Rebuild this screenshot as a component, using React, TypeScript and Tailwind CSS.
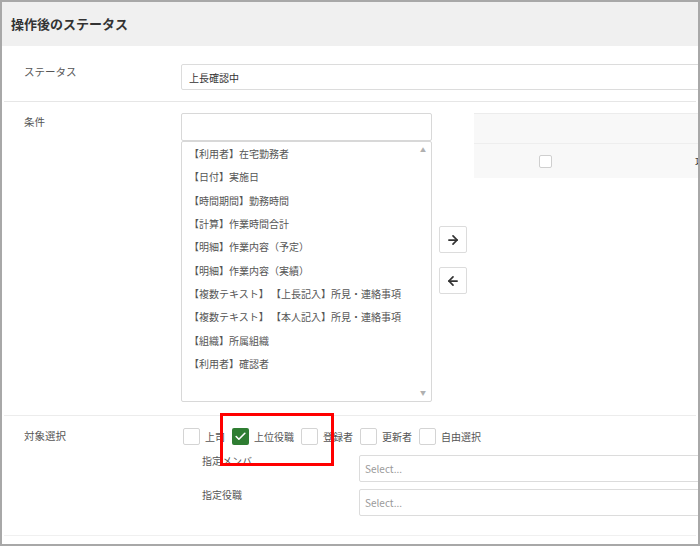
import { ArrowLeft, ArrowRight, Check } from "lucide-react";

const FONT = { fontFamily: '"Noto Sans CJK JP", "Noto Sans", sans-serif' };

const items = [
  "【利用者】在宅勤務者",
  "【日付】実施日",
  "【時間期間】勤務時間",
  "【計算】作業時間合計",
  "【明細】作業内容（予定）",
  "【明細】作業内容（実績）",
  "【複数テキスト】 【上長記入】所見・連絡事項",
  "【複数テキスト】 【本人記入】所見・連絡事項",
  "【組織】所属組織",
  "【利用者】確認者",
];

const targets = [
  { label: "上司", checked: false },
  { label: "上位役職", checked: true },
  { label: "登録者", checked: false },
  { label: "更新者", checked: false },
  { label: "自由選択", checked: false },
];

function Box({ checked }: { checked?: boolean }) {
  return checked ? (
    <span className="flex h-[17px] w-[17px] items-center justify-center rounded-[2px] bg-[#2f7d32]">
      <Check size={13} strokeWidth={3} color="#ffffff" />
    </span>
  ) : (
    <span className="h-[17px] w-[17px] rounded-[2px] border border-[#d4d4d4] bg-white" />
  );
}

export default function App() {
  return (
    <div
      className="relative h-[546px] w-[700px] overflow-hidden border-2 border-[#a8a8a8] bg-white text-[#555]"
      style={FONT}
    >
      <div className="flex h-[44px] items-center bg-[#f0f0f0] pl-[9px] text-[13px] font-bold text-[#333]">
        操作後のステータス
      </div>

      <div className="px-[2px]">
        {/* ステータス */}
        <div className="flex border-b border-[#e6e6e6] pb-[11px] pt-[18px]">
          <div className="w-[177px] shrink-0 pl-[20px] text-[10.5px] leading-[16px]">ステータス</div>
          <div className="flex h-[26px] w-[560px] shrink-0 items-center rounded-[2px] border border-[#dcdcdc] pl-[7px] text-[10px] text-[#333]">
            上長確認中
          </div>
        </div>

        {/* 条件 */}
        <div className="flex h-[314px] border-b border-[#ececec] pt-[11px]">
          <div className="w-[177px] shrink-0 pl-[20px] pt-[1px] text-[10.5px] leading-[16px]">条件</div>
          <div className="flex w-[251px] shrink-0 flex-col">
            <div className="h-[28px] rounded-[2px] border border-[#d8d8d8]" />
            <div className="relative h-[261px] rounded-[2px] border border-[#d8d8d8] text-[10px]">
              {items.map((t) => (
                <div key={t} className="flex h-[23.3px] items-center whitespace-pre pl-[7px]">
                  {t}
                </div>
              ))}
              <span className="absolute right-[5px] top-[5px] text-[6px] leading-[6px] text-[#b0b0b0]">▲</span>
              <span className="absolute bottom-[5px] right-[5px] text-[6px] leading-[6px] text-[#b0b0b0]">▼</span>
            </div>
          </div>
          <div className="ml-[7px] flex w-[28px] shrink-0 flex-col gap-[14px] pt-[113px]">
            <div className="flex h-[27px] items-center justify-center rounded-[2px] border border-[#dcdcdc]">
              <ArrowRight size={14} strokeWidth={3} color="#333" />
            </div>
            <div className="flex h-[27px] items-center justify-center rounded-[2px] border border-[#dcdcdc]">
              <ArrowLeft size={14} strokeWidth={3} color="#333" />
            </div>
          </div>
          <div className="ml-[7px] h-[65px] w-[300px] shrink-0 border-t border-[#ececec] bg-[#f8f8f8]">
            <div className="h-[30px] border-b border-[#eeeeee]" />
            <div className="flex h-[34px] items-center">
              <div className="flex w-[142px] justify-center">
                <span className="h-[13px] w-[13px] rounded-[2px] border border-[#cfcfcf] bg-white" />
              </div>
              <span className="pl-[79px] text-[10px] text-[#333]">項目</span>
            </div>
          </div>
        </div>

        {/* 対象選択 */}
        <div className="flex h-[120px] border-b border-[#f0f0f0] pt-[12px]">
          <div className="w-[177px] shrink-0 pl-[20px] text-[10.5px] leading-[16px]">対象選択</div>
          <div className="flex flex-col pl-[2px]">
            <div className="flex items-center text-[10px]">
              {targets.map((t) => (
                <div key={t.label} className="mr-[7px] flex items-center gap-[5px]">
                  <Box checked={t.checked} />
                  <span>{t.label}</span>
                </div>
              ))}
            </div>
            <div className="mt-[10px] flex flex-col gap-[7px] pl-[19px] text-[10px]">
              <div className="flex">
                <div className="w-[157px] shrink-0 leading-[12px]">指定メンバ</div>
                <div className="flex h-[27px] w-[400px] shrink-0 items-center rounded-[2px] border border-[#dcdcdc] pl-[5px] text-[10px] text-[#9a9a9a]">
                  Select...
                </div>
              </div>
              <div className="flex">
                <div className="w-[157px] shrink-0 leading-[12px]">指定役職</div>
                <div className="flex h-[27px] w-[400px] shrink-0 items-center rounded-[2px] border border-[#dcdcdc] pl-[5px] text-[10px] text-[#9a9a9a]">
                  Select...
                </div>
              </div>
            </div>
          </div>
        </div>
      </div>

      <div className="absolute left-[218px] top-[411px] h-[53px] w-[114px] border-[3px] border-[#ff0000]" />
    </div>
  );
}
